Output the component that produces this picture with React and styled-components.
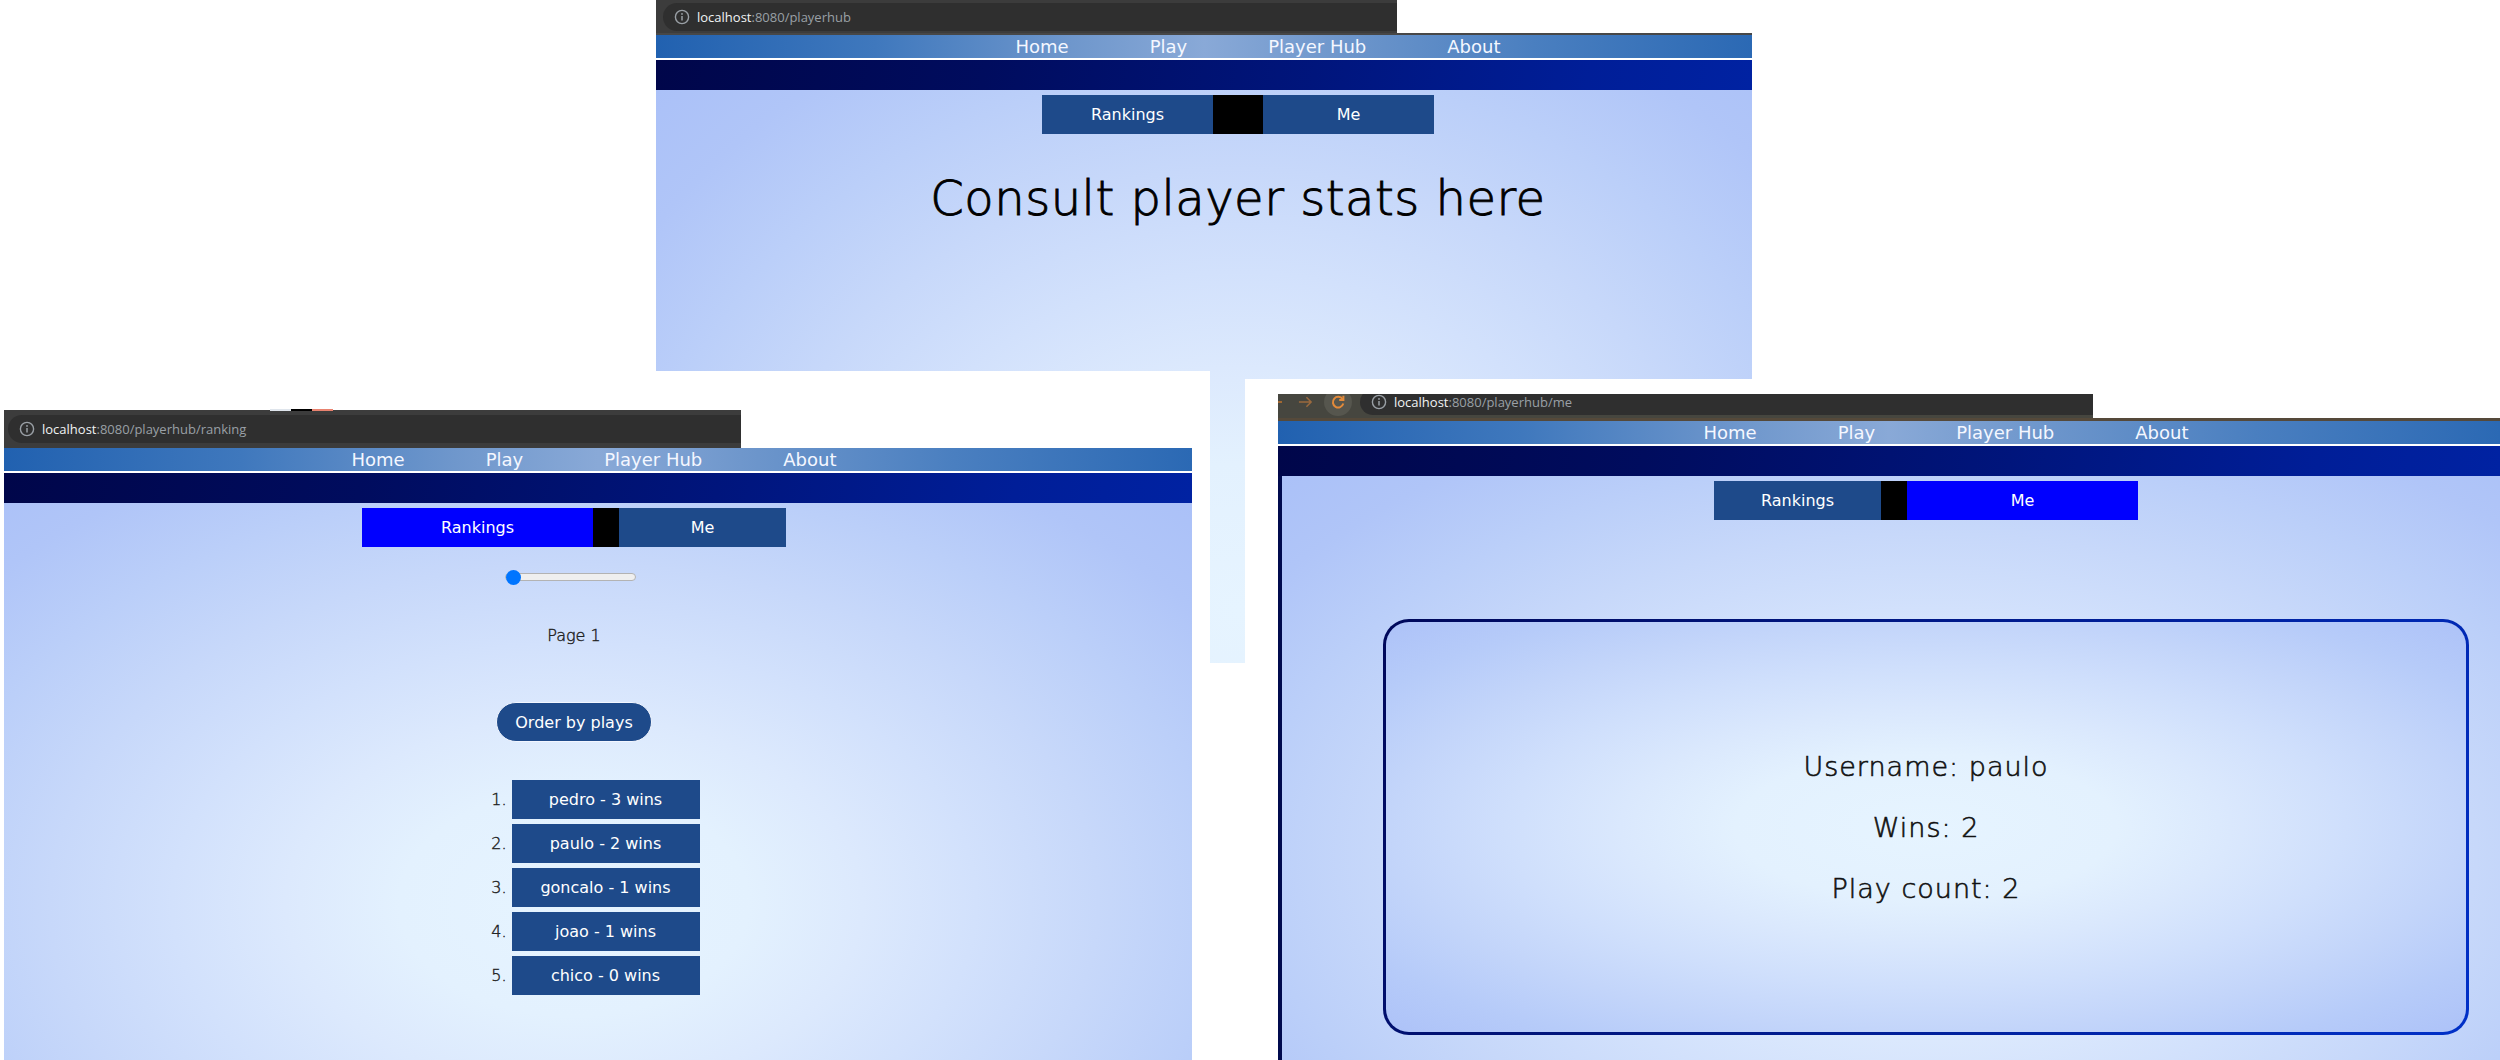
import React from 'react';
import styled, { createGlobalStyle } from 'styled-components';

const Global = createGlobalStyle`
  html, body { margin: 0; padding: 0; background: #ffffff; }
  body { font-family: "DejaVu Sans", "Open Sans", sans-serif; }
  * { box-sizing: border-box; }
`;

const Canvas = styled.div`
  position: relative;
  width: 2500px;
  height: 1060px;
  overflow: hidden;
  background: #ffffff;
`;

const Shot = styled.div`
  position: absolute;
  left: ${p => p.$x}px;
  top: ${p => p.$y}px;
  width: ${p => p.$w}px;
  height: ${p => p.$h}px;
  padding: ${p => p.$pt}px ${p => p.$pr}px 0 ${p => p.$pl}px;
  background: #ffffff;
`;

const Frame = styled.div`
  width: 100%;
  height: 100%;
  overflow: hidden;
  display: flex;
  flex-direction: column;
  align-items: flex-start;
`;

const ChromeBar = styled.div`
  flex-shrink: 0;
  width: ${p => p.$w}px;
  height: ${p => p.$h}px;
  background: ${p => p.$bg};
  display: flex;
  align-items: center;
  padding: 0 0 ${p => p.$shift}px ${p => p.$pl}px;
  overflow: hidden;
`;

const ChromeLine = styled.div`
  flex-shrink: 0;
  align-self: stretch;
  height: ${p => p.$h}px;
  background: ${p => p.$c};
`;

const Pill = styled.div`
  flex: 1;
  height: ${p => p.$h}px;
  background: #2f2f2f;
  border-radius: ${p => p.$h / 2}px 0 0 ${p => p.$h / 2}px;
  display: flex;
  align-items: center;
  padding-left: 11px;
  font-family: "Open Sans", "Noto Sans", sans-serif;
  font-size: 13px;
  white-space: nowrap;
  gap: 7px;
`;

const UrlHost = styled.span`
  color: #f1f3f4;
`;

const UrlRest = styled.span`
  color: #9aa0a6;
`;

const NavIcon = styled.div`
  flex-shrink: 0;
  display: flex;
  align-items: center;
  justify-content: center;
  width: ${p => p.$w}px;
  height: ${p => p.$h}px;
  margin-right: ${p => p.$mr}px;
  border-radius: 50%;
  background: ${p => p.$bg || 'transparent'};
`;

const TabTips = styled.div`
  position: absolute;
  left: 270px;
  top: 38px;
  display: flex;
  height: 2px;
`;

const TabTip = styled.span`
  width: 21px;
  height: 2px;
  background: ${p => p.$c};
`;

const Page = styled.div`
  flex-shrink: 0;
  align-self: stretch;
  display: flex;
  flex-direction: column;
`;

const shiftPad = off =>
  `padding-left: ${Math.max(0, off * 2)}px; padding-right: ${Math.max(0, -off * 2)}px;`;

const NavBar = styled.nav`
  height: 23px;
  display: flex;
  justify-content: center;
  ${p => shiftPad(p.$offset + 20)}
  background: linear-gradient(90deg, #2161b0 0%, #3f78bd 20%, #6f97cc 38%, #89a9d7 50%, #6f97cc 62%, #4a7fc0 80%, #2b69b4 100%);
`;

const NavLink = styled.span`
  padding: 0 40.5px;
  color: #f4f7ff;
  font-size: 18px;
  line-height: 23px;
  white-space: nowrap;
`;

const WhiteRule = styled.div`
  height: 2px;
  background: #ffffff;
`;

const Band = styled.div`
  height: 30px;
  background: linear-gradient(100deg, #00064a 0%, #000c5e 30%, #00157c 60%, #001e98 85%, #0022a2 100%);
`;

const Content = styled.main`
  height: ${p => p.$h}px;
  padding-top: 5px;
  ${p => shiftPad(p.$offset)}
  display: flex;
  flex-direction: column;
  align-items: center;
  border-left: ${p => (p.$edge ? '4px solid #000a4e' : 'none')};
  background: radial-gradient(ellipse farthest-corner at ${p => p.$cx}px ${p => p.$cy}px, #e6f4ff 0%, #e3f1fe 20%, #dce9fd 33%, #d2e1fc 46%, #c7d8fa 60%, #bbcff9 74%, #b0c5f8 88%, #abc1f8 100%);
`;

const TabGroup = styled.div`
  display: flex;
  gap: ${p => p.$gap}px;
  background: #000000;
  height: 39px;
`;

const Tab = styled.div`
  width: ${p => p.$w}px;
  height: 39px;
  background: ${p => (p.$active ? '#0000ff' : '#1e4a8a')};
  color: #ffffff;
  font-size: 16px;
  line-height: 39px;
  text-align: center;
`;

const Heading = styled.h1`
  margin: 36px 0 0;
  font-size: 48px;
  font-weight: 200;
  line-height: 1.2;
  letter-spacing: 0.5px;
  color: #000000;
  -webkit-text-stroke: 0.9px #000000;
`;

const Range = styled.input`
  -webkit-appearance: none;
  appearance: none;
  margin: 22px 8px 0 0;
  width: 131px;
  height: 16px;
  background: transparent;
  &::-webkit-slider-runnable-track {
    height: 8px;
    background: #efefef;
    border: 1px solid #b3b3b3;
    border-radius: 4px;
  }
  &::-webkit-slider-thumb {
    -webkit-appearance: none;
    width: 15px;
    height: 15px;
    margin-top: -4.5px;
    border-radius: 50%;
    background: #0075ff;
    border: none;
  }
`;

const PageLabel = styled.div`
  margin-top: 41px;
  font-size: 16px;
  font-weight: 200;
  line-height: 20px;
  color: #222222;
  -webkit-text-stroke: 0.4px #222222;
`;

const OrderButton = styled.button`
  margin-top: 56px;
  height: 40px;
  padding: 0 18px;
  border: 1px solid #f2f6ff;
  border-radius: 20px;
  background: #1e4a8a;
  color: #ffffff;
  font-family: "DejaVu Sans", sans-serif;
  font-size: 16px;
`;

const RankList = styled.ol`
  list-style: none;
  margin: 38px 0 0;
  padding: 0 0 0 38px;
  display: flex;
  flex-direction: column;
  gap: 5px;
`;

const RankRow = styled.li`
  display: flex;
  align-items: center;
  gap: 5px;
`;

const RankNum = styled.span`
  width: 20px;
  text-align: right;
  font-size: 16px;
  font-weight: 200;
  color: #222222;
  -webkit-text-stroke: 0.4px #222222;
`;

const RankBox = styled.div`
  width: 188px;
  height: 39px;
  background: #1e4a8a;
  color: #ffffff;
  font-size: 16px;
  line-height: 39px;
  text-align: center;
`;

const Card = styled.section`
  margin-top: 99px;
  width: 1086px;
  height: 416px;
  border: 3px solid transparent;
  border-radius: 26px;
  background:
    radial-gradient(ellipse farthest-corner at 50% 50%, #e6f4ff 0%, #e3f1fe 25%, #dae8fd 40%, #cfdffc 55%, #c3d5fa 70%, #b6cbf9 85%, #adc2f8 100%) padding-box,
    linear-gradient(120deg, #00085a 0%, #001a8c 45%, #0030c8 100%) border-box;
  display: flex;
  flex-direction: column;
  align-items: center;
  justify-content: center;
  gap: 30px;
`;

const StatLine = styled.p`
  margin: 0;
  font-size: 27px;
  font-weight: 200;
  line-height: 31px;
  letter-spacing: 1px;
  color: #111111;
  -webkit-text-stroke: 0.6px #111111;
`;

const InfoIcon = () => (
  <svg width="16" height="16" viewBox="0 0 16 16" fill="none">
    <circle cx="8" cy="8" r="6.6" stroke="#9aa0a6" strokeWidth="1.4" />
    <line x1="8" y1="7" x2="8" y2="11.6" stroke="#9aa0a6" strokeWidth="1.5" />
    <circle cx="8" cy="4.9" r="0.95" fill="#9aa0a6" />
  </svg>
);

const BackStub = () => (
  <svg width="4" height="4" viewBox="0 0 4 4">
    <line x1="0" y1="2" x2="4" y2="2" stroke="#b8702f" strokeWidth="1.6" />
  </svg>
);

const ForwardArrow = () => (
  <svg width="16" height="14" viewBox="0 0 16 14" fill="none">
    <path d="M1 7h13M9 2l5 5-5 5" stroke="#9b6a3e" strokeWidth="1.6" />
  </svg>
);

const ReloadGlyph = () => (
  <svg width="16" height="16" viewBox="0 0 16 16" fill="none">
    <path d="M12.6 5.2A5.3 5.3 0 1 0 13.3 9.6" stroke="#e38a3a" strokeWidth="2" />
    <path d="M13.4 1.8v4.2H9.2" stroke="#e38a3a" strokeWidth="2" />
  </svg>
);

const Url = ({ path }) => (
  <>
    <InfoIcon />
    <span>
      <UrlHost>localhost</UrlHost>
      <UrlRest>:8080{path}</UrlRest>
    </span>
  </>
);

const Nav = ({ offset }) => (
  <>
    <NavBar $offset={offset}>
      {['Home', 'Play', 'Player Hub', 'About'].map(l => (
        <NavLink key={l}>{l}</NavLink>
      ))}
    </NavBar>
    <WhiteRule />
    <Band />
  </>
);

const Tabs = ({ widths, gap, active }) => (
  <TabGroup $gap={gap}>
    <Tab $w={widths[0]} $active={active === 'rankings'}>Rankings</Tab>
    <Tab $w={widths[1]} $active={active === 'me'}>Me</Tab>
  </TabGroup>
);

const players = [
  ['pedro', 3],
  ['paulo', 2],
  ['goncalo', 1],
  ['joao', 1],
  ['chico', 0],
];

export default function App() {
  return (
    <Canvas>
      <Global />

      <Shot $x={656} $y={0} $w={1096} $h={663} $pl={0} $pt={0} $pr={0}>
        <Frame>
          <ChromeBar $w={741} $h={33} $bg="#3c3c3c" $pl={7} $shift={0}>
            <Pill $h={28}>
              <Url path="/playerhub" />
            </Pill>
          </ChromeBar>
          <ChromeLine $h={2} $c="#474747" />
          <Page>
            <Nav offset={34} />
            <Content $h={620} $offset={34} $cx={582} $cy={520}>
              <Tabs widths={[171, 171]} gap={50} active={null} />
              <Heading>Consult player stats here</Heading>
            </Content>
          </Page>
        </Frame>
      </Shot>

      <Shot $x={0} $y={371} $w={1210} $h={689} $pl={4} $pt={39} $pr={18}>
        <TabTips>
          <TabTip $c="#dfe5ec" />
          <TabTip $c="#000000" />
          <TabTip $c="#e8826f" />
        </TabTips>
        <Frame>
          <ChromeBar $w={737} $h={38} $bg="#3c3c3c" $pl={4} $shift={0}>
            <Pill $h={28}>
              <Url path="/playerhub/ranking" />
            </Pill>
          </ChromeBar>
          <Page>
            <Nav offset={-24} />
            <Content $h={620} $offset={-24} $cx={570} $cy={400}>
              <Tabs widths={[231, 167]} gap={26} active="rankings" />
              <Range type="range" min={1} max={5} defaultValue={1} />
              <PageLabel>Page 1</PageLabel>
              <OrderButton>Order by plays</OrderButton>
              <RankList>
                {players.map(([name, wins], i) => (
                  <RankRow key={name}>
                    <RankNum>{i + 1}.</RankNum>
                    <RankBox>{name} - {wins} wins</RankBox>
                  </RankRow>
                ))}
              </RankList>
            </Content>
          </Page>
        </Frame>
      </Shot>

      <Shot $x={1245} $y={379} $w={1255} $h={681} $pl={33} $pt={15} $pr={0}>
        <Frame>
          <ChromeBar $w={815} $h={24} $bg="#46463f" $pl={0} $shift={8}>
            <NavIcon $w={4} $h={4} $mr={16}><BackStub /></NavIcon>
            <NavIcon $w={15} $h={14} $mr={11}><ForwardArrow /></NavIcon>
            <NavIcon $w={28} $h={28} $mr={8} $bg="#56564e"><ReloadGlyph /></NavIcon>
            <Pill $h={26}>
              <Url path="/playerhub/me" />
            </Pill>
          </ChromeBar>
          <ChromeLine $h={3} $c="#55493a" />
          <Page>
            <Nav offset={37} />
            <Content $h={620} $offset={35} $edge $cx={646} $cy={380}>
              <Tabs widths={[167, 231]} gap={26} active="me" />
              <Card>
                <StatLine>Username: paulo</StatLine>
                <StatLine>Wins: 2</StatLine>
                <StatLine>Play count: 2</StatLine>
              </Card>
            </Content>
          </Page>
        </Frame>
      </Shot>
    </Canvas>
  );
}
